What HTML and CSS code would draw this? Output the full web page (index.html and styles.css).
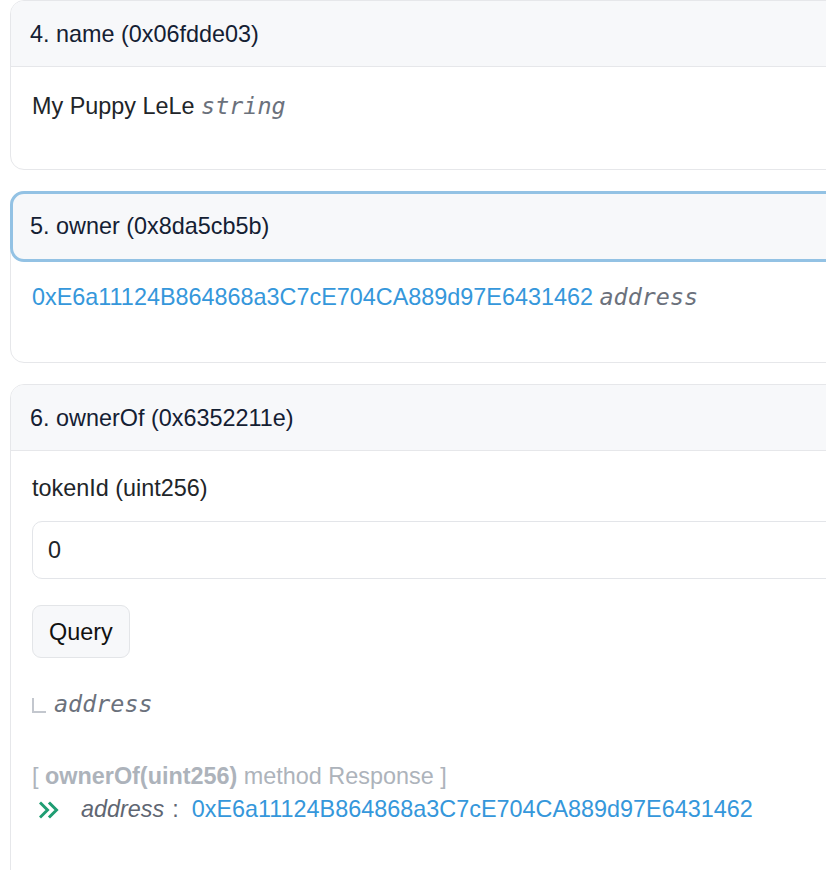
FILE: index.html
```html
<!DOCTYPE html>
<html lang="en">
<head>
<meta charset="utf-8">
<title>Read Contract</title>
<link rel="stylesheet" href="styles.css">
</head>
<body>
<div class="page">
  <section class="card">
    <div class="card-header">4. name (0x06fdde03)</div>
    <div class="card-body">
      <div class="value">My Puppy LeLe <span class="type">string</span></div>
    </div>
  </section>

  <section class="card active">
    <div class="card-header">5. owner (0x8da5cb5b)</div>
    <div class="card-body">
      <div class="value"><a class="link" href="#">0xE6a11124B864868a3C7cE704CA889d97E6431462</a> <span class="type">address</span></div>
    </div>
  </section>

  <section class="card">
    <div class="card-header">6. ownerOf (0x6352211e)</div>
    <div class="card-body form">
      <label class="field-label" for="tokenId">tokenId (uint256)</label>
      <input class="field-input" id="tokenId" type="text" value="0">
      <button class="btn" type="button">Query</button>
      <div class="output-type"><span class="corner"></span><span class="type">address</span></div>
      <div class="response">
        <div class="response-title">[ <b>ownerOf(uint256)</b> method Response ]</div>
        <div class="response-row">
          <svg class="chev" width="20" height="18" viewBox="0 0 20 18" aria-hidden="true">
            <polyline points="2,2.5 8.5,9 2,15.5" fill="none" stroke="#1f9d72" stroke-width="3" stroke-linecap="square"/>
            <polyline points="11,2.5 17.5,9 11,15.5" fill="none" stroke="#1f9d72" stroke-width="3" stroke-linecap="square"/>
          </svg>
          <span class="resp-name">address</span><span class="resp-colon">:</span><a class="link" href="#">0xE6a11124B864868a3C7cE704CA889d97E6431462</a>
        </div>
      </div>
    </div>
  </section>
</div>
</body>
</html>
```

FILE: styles.css
```css
html, body {
  margin: 0;
  padding: 0;
  overflow: hidden;
  background: #ffffff;
}

body {
  font-family: "Liberation Sans", Arial, Helvetica, sans-serif;
  font-size: 23.4px;
  line-height: 35px;
  color: #212529;
}

.page {
  width: 1100px;
  padding-left: 10px;
}

.card {
  width: 1000px;
  border: 1px solid #e6e7ea;
  border-radius: 14px;
  margin-bottom: 21px;
  background: #ffffff;
}

.card-header {
  background: #f7f8fa;
  padding: 16px 19px 14px;
  border-bottom: 1px solid #e6e7ea;
  border-radius: 13px 13px 0 0;
  color: #142033;
}

.card.active .card-header {
  margin: -1px -1px 0;
  border: 3px solid #93c2e4;
  border-radius: 14px;
  padding: 15px 17px;
}

.card-body {
  padding: 22px 21px 45px;
}

.card.active .card-body {
  padding: 18px 21px 47px;
}

.type {
  font-family: "DejaVu Sans Mono", "Liberation Mono", monospace;
  font-style: italic;
  color: #6b717c;
}

.link {
  color: #3597db;
  text-decoration: none;
}

.card-body.form {
  padding: 20px 21px 60px;
  display: flex;
  flex-direction: column;
  align-items: flex-start;
}

.field-label {
  display: block;
  color: #212529;
}

.field-input {
  box-sizing: border-box;
  width: 900px;
  height: 58px;
  margin-top: 15px;
  padding: 0 15px;
  border: 1px solid #e3e5e9;
  border-radius: 10px;
  font-family: inherit;
  font-size: 23.4px;
  color: #212529;
  background: #ffffff;
  outline: none;
}

.btn {
  margin-top: 26px;
  height: 53px;
  padding: 2px 16px 0;
  border: 1px solid #e3e5e8;
  border-radius: 9px;
  background: #f7f8fa;
  font-family: inherit;
  font-size: 23.4px;
  color: #111111;
}

.output-type {
  margin-top: 29px;
  display: flex;
  align-items: center;
}

.corner {
  display: inline-block;
  width: 12px;
  height: 13px;
  margin: 1px 8px 0 0;
  border-left: 2px solid #c3c7ce;
  border-bottom: 2px solid #c3c7ce;
}

.response {
  margin-top: 38px;
  line-height: 33px;
}

.response-title {
  color: #adb3bb;
}

.response-title b {
  font-weight: bold;
}

.response-row {
  display: flex;
  align-items: center;
}

.chev {
  margin-left: 7px;
  margin-right: 22px;
}

.resp-name {
  font-style: italic;
  color: #5f6672;
}

.resp-colon {
  color: #5f6672;
  margin-left: 6px;
  margin-right: 13px;
  padding-left: 2px;
}
```
